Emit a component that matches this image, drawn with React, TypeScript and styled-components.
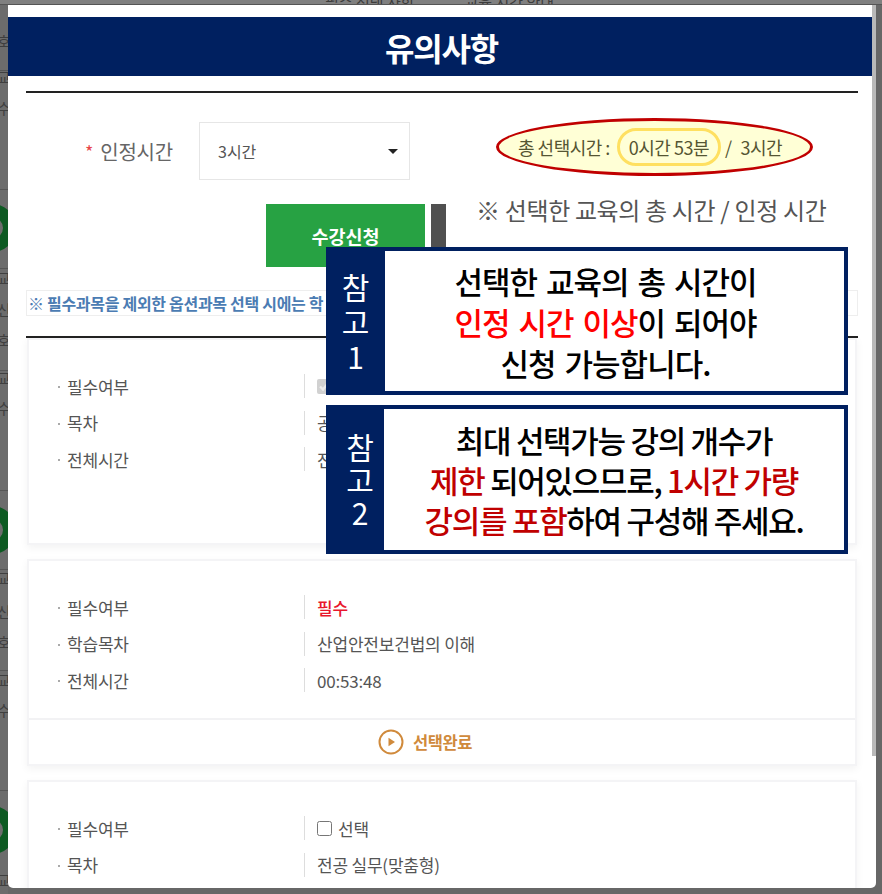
import React from "react";
import styled, { createGlobalStyle } from "styled-components";

const GlobalStyle = createGlobalStyle`
    html, body {
        margin: 0;
        padding: 0;
        background: #676767;
    }
    * {
        box-sizing: border-box;
    }
`;

const Stage = styled.div`
    width: 882px;
    height: 894px;
    overflow: hidden;
    background: #676767;
    font-family: "Noto Sans CJK KR", "Noto Sans", sans-serif;
`;

const TopStrip = styled.div`
    height: 5px;
    overflow: hidden;
    display: flex;
    align-items: flex-end;
    gap: 50px;
    padding-left: 325px;
    border-bottom: 1px solid #555;
    background: #808080;
    color: #3c3c3c;
    font-size: 15px;
    line-height: 5px;
    white-space: nowrap;
`;

const Middle = styled.div`
    display: flex;
    align-items: flex-start;
`;

const Strip = styled.div`
    width: 8px;
    height: 889px;
    flex: none;
    overflow: hidden;
    background: #6c6c6c;
`;

const StripGlyph = styled.div<{ $top: number }>`
    height: 18px;
    margin-top: ${(p) => p.$top}px;
    margin-left: -3px;
    color: #3f3f3f;
    font-size: 15px;
    line-height: 18px;
    white-space: nowrap;
`;

const StripLine = styled.div<{ $top: number }>`
    height: 1px;
    margin-top: ${(p) => p.$top}px;
    background: #565656;
`;

const StripRing = styled.div<{ $top: number }>`
    width: 48px;
    height: 48px;
    margin-top: ${(p) => p.$top}px;
    margin-left: -32px;
    border: 13px solid #0d5a22;
    border-radius: 50%;
`;

const Modal = styled.div`
    position: relative;
    width: 868px;
    height: 883px;
    flex: none;
    overflow: hidden;
    padding: 86px 18px 0;
    background: #fff;
    border-radius: 0 0 5px 5px;
`;

const ScrollThumb = styled.div`
    position: absolute;
    top: 0;
    right: 0;
    width: 4px;
    height: 751px;
    background: #b9b9b9;
`;

const Banner = styled.div`
    position: absolute;
    top: 12px;
    left: 0;
    width: 867px;
    height: 59px;
    display: flex;
    align-items: center;
    justify-content: center;
    background: #002060;
    color: #fff;
    font-size: 32px;
    font-weight: 700;
    letter-spacing: -1.2px;
`;

const Rule = styled.div`
    height: 2px;
    background: #222;
`;

const FormRow = styled.div`
    display: flex;
    align-items: flex-start;
    margin-top: 29px;
`;

const FieldLabel = styled.div`
    width: 173px;
    height: 58px;
    padding-left: 59px;
    display: flex;
    align-items: center;
    color: #666;
    font-size: 20px;
    letter-spacing: -0.2px;
`;

const Required = styled.span`
    margin-right: 7px;
    color: #e8464a;
    font-size: 18px;
`;

const SelectBox = styled.div`
    width: 211px;
    height: 58px;
    padding: 0 11px 0 18px;
    display: flex;
    align-items: center;
    justify-content: space-between;
    border: 1px solid #e6e6e6;
    color: #555;
    font-size: 16px;
`;

const SelectArrow = styled.span`
    width: 0;
    height: 0;
    border-left: 5px solid transparent;
    border-right: 5px solid transparent;
    border-top: 5px solid #222;
`;

const TotalOval = styled.div`
    width: 317px;
    height: 58px;
    margin: -4px 0 0 86px;
    padding-left: 19px;
    display: flex;
    align-items: center;
    background: #ffffd6;
    border: 3px solid #c00000;
    border-radius: 50%;
    color: #555533;
    font-size: 18px;
    letter-spacing: -0.5px;
    white-space: nowrap;
`;

const TotalNow = styled.span`
    width: 104px;
    height: 38px;
    margin: 0 4px 0 7px;
    display: flex;
    align-items: center;
    justify-content: center;
    border: 3px solid #ffe060;
    border-radius: 19px;
`;

const TotalGoal = styled.span`
    margin-left: 9px;
`;

const ActionRow = styled.div`
    display: flex;
    align-items: flex-start;
    margin-top: 24px;
    padding-left: 240px;
`;

const ApplyButton = styled.div`
    width: 159px;
    height: 63px;
    display: flex;
    align-items: center;
    justify-content: center;
    background: #27a243;
    color: #fff;
    font-size: 18.5px;
    font-weight: 700;
`;

const DarkButton = styled.div`
    width: 15px;
    height: 63px;
    margin-left: 6px;
    background: #505050;
`;

const HintText = styled.div`
    margin: -9px 0 0 30px;
    color: #555;
    font-size: 24px;
    letter-spacing: -0.35px;
    line-height: 30px;
    white-space: nowrap;
`;

const Notice = styled.div`
    height: 26px;
    margin: 23px 0 20px;
    padding-left: 1px;
    display: flex;
    align-items: center;
    border: 1px solid #eee;
    color: #4b7cb3;
    font-size: 16px;
    font-weight: 700;
    letter-spacing: -0.3px;
    white-space: nowrap;
`;

const CardList = styled.div`
    display: flex;
    flex-direction: column;
    gap: 14px;
    margin: 0 1px;
`;

const Card = styled.div`
    height: 207px;
    flex: none;
    display: flex;
    flex-direction: column;
    padding-top: 34px;
    border: 2px solid #f4f4f6;
    box-shadow: 0 3px 8px rgba(0, 0, 0, 0.05);
`;

const Rows = styled.div`
    flex: 1;
    display: flex;
    flex-direction: column;
    gap: 12.5px;
`;

const Row = styled.div`
    height: 24px;
    flex: none;
    display: flex;
    align-items: center;
`;

const RowLabel = styled.div`
    width: 275px;
    padding-left: 38px;
    position: relative;
    color: #555;
    font-size: 17px;
    letter-spacing: -0.2px;

    &::before {
        content: "";
        position: absolute;
        left: 29px;
        top: 50%;
        width: 2px;
        height: 2px;
        background: #aaa;
    }
`;

const RowValue = styled.div<{ $danger?: boolean }>`
    height: 24px;
    padding-left: 12px;
    display: flex;
    align-items: center;
    gap: 6px;
    border-left: 1px solid #ddd;
    color: ${(p) => (p.$danger ? "#e8172c" : "#555")};
    font-size: 17px;
    font-weight: ${(p) => (p.$danger ? 500 : 400)};
    letter-spacing: -0.2px;
`;

const CheckBox = styled.input`
    width: 15px;
    height: 15px;
    margin: 0;
`;

const CardFooter = styled.div`
    height: 46px;
    flex: none;
    padding-right: 34px;
    display: flex;
    align-items: center;
    justify-content: center;
    gap: 9px;
    border-top: 2px solid #f2f2f4;
    color: #d08a3c;
    font-size: 16.5px;
    font-weight: 700;
    letter-spacing: -0.4px;
`;

const NoteBox = styled.div<{ $top: number; $height: number; $side: number }>`
    position: absolute;
    left: 318px;
    top: ${(p) => p.$top}px;
    width: 522px;
    height: ${(p) => p.$height}px;
    display: grid;
    grid-template-columns: ${(p) => p.$side}px 1fr;
    background: #fff;
    border: 4px solid #002060;
    border-left: 0;
`;

const NoteSide = styled.div<{ $pad: number; $leading: number }>`
    display: flex;
    flex-direction: column;
    align-items: center;
    justify-content: center;
    padding-left: ${(p) => p.$pad}px;
    background: #002060;
    color: #fff;
    font-size: 30px;
    line-height: ${(p) => p.$leading}px;
`;

const NoteBody = styled.div<{ $tight?: boolean }>`
    display: flex;
    flex-direction: column;
    align-items: center;
    justify-content: center;
    padding-right: ${(p) => (p.$tight ? 0 : 18)}px;
    color: #000;
    font-size: 31px;
    font-weight: 500;
    line-height: ${(p) => (p.$tight ? 40 : 41)}px;
    letter-spacing: ${(p) => (p.$tight ? -1.3 : -1)}px;
    word-spacing: ${(p) => (p.$tight ? 0 : 3)}px;
    white-space: nowrap;
`;

const Mark = styled.span<{ $deep?: boolean }>`
    color: ${(p) => (p.$deep ? "#c00000" : "#ff0000")};
`;

const stripItems = [
    { kind: "glyph", text: "호", top: 27 },
    { kind: "line", top: 20 },
    { kind: "glyph", text: "교", top: -3 },
    { kind: "glyph", text: "수", top: 13 },
    { kind: "line", top: 72 },
    { kind: "ring", top: 14 },
    { kind: "line", top: 16 },
    { kind: "glyph", text: "교", top: 0 },
    { kind: "glyph", text: "신", top: 14 },
    { kind: "glyph", text: "호", top: 12 },
    { kind: "line", top: 21 },
    { kind: "glyph", text: "교", top: -2 },
    { kind: "glyph", text: "수", top: 12 },
    { kind: "line", top: 73 },
    { kind: "ring", top: 15 },
    { kind: "line", top: 15 },
    { kind: "glyph", text: "교", top: -1 },
    { kind: "glyph", text: "신", top: 16 },
    { kind: "glyph", text: "호", top: 12 },
    { kind: "line", top: 19 },
    { kind: "glyph", text: "교", top: 0 },
    { kind: "glyph", text: "수", top: 12 },
    { kind: "line", top: 71 },
    { kind: "ring", top: 15 },
    { kind: "glyph", text: "교", top: 17 },
];

const PlayIcon = () => (
    <svg width="26" height="26" viewBox="0 0 26 26" fill="none">
        <circle cx="13" cy="13" r="11.5" stroke="#d08a3c" strokeWidth="2" />
        <path d="M10.5 8.8 L17 13 L10.5 17.2 Z" fill="#d08a3c" />
    </svg>
);

const App = () => {
    return (
        <Stage>
            <GlobalStyle />
            <TopStrip>
                <span>필수 선택 사항</span>
                <span>교육 시간 안내</span>
            </TopStrip>
            <Middle>
                <Strip>
                    {stripItems.map((item, index) => {
                        if (item.kind === "line") return <StripLine key={index} $top={item.top} />;
                        if (item.kind === "ring") return <StripRing key={index} $top={item.top} />;
                        return (
                            <StripGlyph key={index} $top={item.top}>
                                {item.text}
                            </StripGlyph>
                        );
                    })}
                </Strip>
                <Modal>
                    <Banner>유의사항</Banner>
                    <Rule />
                    <FormRow>
                        <FieldLabel>
                            <Required>*</Required>인정시간
                        </FieldLabel>
                        <SelectBox>
                            3시간
                            <SelectArrow />
                        </SelectBox>
                        <TotalOval>
                            총 선택시간 :<TotalNow>0시간 53분</TotalNow>/<TotalGoal>3시간</TotalGoal>
                        </TotalOval>
                    </FormRow>
                    <ActionRow>
                        <ApplyButton>수강신청</ApplyButton>
                        <DarkButton />
                        <HintText>※ 선택한 교육의 총 시간 / 인정 시간</HintText>
                    </ActionRow>
                    <Notice>※ 필수과목을 제외한 옵션과목 선택 시에는 학</Notice>
                    <Rule />
                    <CardList>
                        <Card>
                            <Rows>
                                <Row>
                                    <RowLabel>필수여부</RowLabel>
                                    <RowValue>
                                        <CheckBox type="checkbox" checked disabled readOnly />
                                    </RowValue>
                                </Row>
                                <Row>
                                    <RowLabel>목차</RowLabel>
                                    <RowValue>공</RowValue>
                                </Row>
                                <Row>
                                    <RowLabel>전체시간</RowLabel>
                                    <RowValue>전</RowValue>
                                </Row>
                            </Rows>
                        </Card>
                        <Card>
                            <Rows>
                                <Row>
                                    <RowLabel>필수여부</RowLabel>
                                    <RowValue $danger>필수</RowValue>
                                </Row>
                                <Row>
                                    <RowLabel>학습목차</RowLabel>
                                    <RowValue>산업안전보건법의 이해</RowValue>
                                </Row>
                                <Row>
                                    <RowLabel>전체시간</RowLabel>
                                    <RowValue>00:53:48</RowValue>
                                </Row>
                            </Rows>
                            <CardFooter>
                                <PlayIcon />
                                선택완료
                            </CardFooter>
                        </Card>
                        <Card>
                            <Rows>
                                <Row>
                                    <RowLabel>필수여부</RowLabel>
                                    <RowValue>
                                        <CheckBox type="checkbox" readOnly />
                                        선택
                                    </RowValue>
                                </Row>
                                <Row>
                                    <RowLabel>목차</RowLabel>
                                    <RowValue>전공 실무(맞춤형)</RowValue>
                                </Row>
                            </Rows>
                        </Card>
                    </CardList>
                    <ScrollThumb />
                    <NoteBox $top={242} $height={148} $side={59}>
                        <NoteSide $pad={0} $leading={35}>
                            <span>참</span>
                            <span>고</span>
                            <span>1</span>
                        </NoteSide>
                        <NoteBody>
                            <span>선택한 교육의 총 시간이</span>
                            <span>
                                <Mark>인정 시간 이상</Mark>이 되어야
                            </span>
                            <span>신청 가능합니다.</span>
                        </NoteBody>
                    </NoteBox>
                    <NoteBox $top={400} $height={149} $side={58}>
                        <NoteSide $pad={10} $leading={33}>
                            <span>참</span>
                            <span>고</span>
                            <span>2</span>
                        </NoteSide>
                        <NoteBody $tight>
                            <span>최대 선택가능 강의 개수가</span>
                            <span>
                                <Mark $deep>제한</Mark> 되어있으므로, <Mark $deep>1시간 가량</Mark>
                            </span>
                            <span>
                                <Mark $deep>강의를 포함</Mark>하여 구성해 주세요.
                            </span>
                        </NoteBody>
                    </NoteBox>
                </Modal>
            </Middle>
        </Stage>
    );
};

export default App;
